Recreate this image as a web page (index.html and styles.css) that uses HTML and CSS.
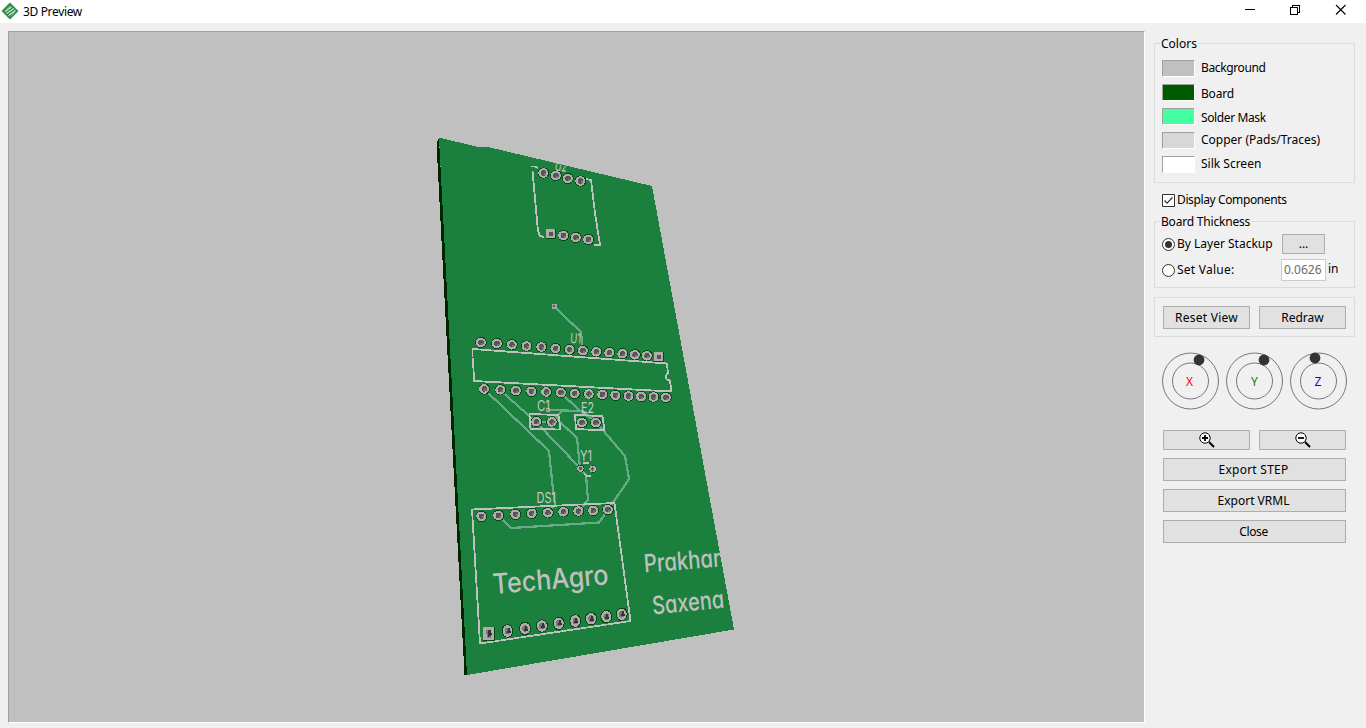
FILE: index.html
```html
<!DOCTYPE html>
<html lang="en">
<head>
<meta charset="utf-8">
<title>3D Preview</title>
<link rel="stylesheet" href="styles.css">
</head>
<body>
<div class="window">
  <header class="titlebar">
    <svg class="logo" width="18" height="18" viewBox="0 0 18 18">
      <path d="M9 .5 17.500 9 9 17.500.5 9z" fill="#2f8a49"/>
      <path d="M4 9.500 10.500 5M5.500 11.500 13 6.500M7.500 13.500 14.500 8.500" stroke="#d9eedc" stroke-width="1.100"/>
      <path d="M6 7 9.500 3.500M9.500 14.500 13.500 10.500" stroke="#8ac59a" stroke-width=".8"/>
    </svg>
    <span class="title">3D Preview</span>
    <svg class="controls" width="104" height="12" viewBox="0 0 104 12" fill="none" stroke="#000" shape-rendering="crispEdges">
      <path d="M0 5.500h10"/>
      <path d="M45.500 3.500h7v7h-7zM47.500 3.500v-2h7v7h-2"/>
      <path d="M91 1l9.500 9.500M100.500 1L91 10.500" shape-rendering="auto" stroke-width="1.100"/>
    </svg>
  </header>
  <main class="content">
    <div class="viewport">
      <svg class="scene" viewBox="9 32 1135 690" width="1135" height="690">
        <defs>
          <clipPath id="boardClip"><path d="M439 137.500 478 147h10L652 186 734 629.500 467 675z"/></clipPath>
          <g id="pad"><ellipse rx="5.800" ry="5.600" fill="#07480f"/><ellipse cx="-.2" rx="5" ry="4.800" fill="#b0acae"/><circle r="2.700" fill="#555"/><path d="M0 0h2v2h-2z" fill="#777"/></g>
          <g id="padL"><ellipse rx="6" ry="6.700" fill="#07480f"/><ellipse rx="5" ry="5.800" fill="#b0acae"/><ellipse rx="2.800" ry="3.300" fill="#777"/><path d="M0-3h2v3h1v2h-4v-2h1z" fill="#333"/></g>
          <g id="sq"><path d="M-5-5H5V5H-5z" fill="#07480f"/><path d="M-5-5H4V4H-5z" fill="#b0acae"/><circle r="2.500" fill="#555"/></g>
        </defs>
        <g shape-rendering="crispEdges">
          <path d="M439 138 437 142v11L442.500 260 464.500 675h3z" fill="#002800"/>
          <path d="M439 137.500 478 147h10L652 186 734 629.500 467 675z" fill="#1b803e"/>
          <g class="trace">
            <path d="M554 306.500 581 332 583 351"/>
            <path d="M484 389 549 451 553 490 555 505 548 512"/>
            <path d="M500 390 536 422 580 468"/>
            <path d="M561 393 579 410 596 422 625 456 629 479 608 510"/>
            <path d="M548 410 583 411 597 422M536 422H552L562 411M557 419 577 438 580 468 586 475 588 500 579 510"/>
            <path d="M498 515 511 528 599 522.500 608 510"/>
          </g>
          <g class="silk">
            <path d="M531 166.500h4l3 1.500M532.500 171 538 231l2 5 4 1M584 178.500l7 1.500 4 33 5 32h-6"/>
            <path d="M472.500 357v-8L667 363.500l1 10q-4 2-1 6l3 1 1.500 11L474 381 473 358"/>
            <path d="M529.500 414 558.500 415 560.500 429.500 530.500 429zM575 415 602.500 416 604.500 430.500 576 429z"/>
            <path d="M583 463h6M584 474l3 2h4"/>
            <path d="M472 509.500 614.500 503 630.500 621 480 643.500z"/>
          </g>
          <path d="M552 304h5v5h-5zM546 408h4v4h-4z" fill="#a5a9a6"/>
          <path d="M553 305h2v2h-2zM547 409h2v2h-2z" fill="#555"/>
          <g>
            <use href="#pad" x="543.500" y="173"/><use href="#pad" x="556" y="175.500"/><use href="#pad" x="568" y="178.500"/><use href="#pad" x="580.500" y="181"/>
            <use href="#sq" x="551" y="234"/><use href="#pad" x="563.500" y="235.500"/><use href="#pad" x="576" y="237.500"/><use href="#pad" x="588.500" y="239.500"/>
          </g>
          <g>
            <use href="#pad" x="481" y="342.500"/><use href="#pad" x="497" y="343.500"/><use href="#pad" x="512" y="344.800"/><use href="#pad" x="526.800" y="346"/><use href="#pad" x="541.500" y="347"/><use href="#pad" x="555.700" y="348.500"/><use href="#pad" x="569.700" y="349.700"/><use href="#pad" x="583" y="350.700"/><use href="#pad" x="596.500" y="351.800"/><use href="#pad" x="609.500" y="352.700"/><use href="#pad" x="622.500" y="353.700"/><use href="#pad" x="635" y="354.800"/><use href="#pad" x="647" y="355.800"/><use href="#sq" x="659" y="357"/>
            <use href="#pad" x="484.300" y="389"/><use href="#pad" x="500.500" y="389.800"/><use href="#pad" x="516" y="390.600"/><use href="#pad" x="531.500" y="391.300"/><use href="#pad" x="546.300" y="392"/><use href="#pad" x="561" y="392.700"/><use href="#pad" x="574.800" y="393.500"/><use href="#pad" x="589" y="394"/><use href="#pad" x="602.500" y="394.500"/><use href="#pad" x="615.500" y="395.300"/><use href="#pad" x="628.700" y="396"/><use href="#pad" x="641.200" y="396.500"/><use href="#pad" x="653.700" y="397"/><use href="#pad" x="666" y="397.500"/>
          </g>
          <g>
            <use href="#pad" x="536.500" y="421.700"/><use href="#pad" x="552" y="422"/><use href="#pad" x="582" y="422.500"/><use href="#pad" x="596" y="422.700"/>
            <use href="#pad" transform="translate(580.500 468.700) scale(.65)"/><use href="#pad" transform="translate(592.700 469) scale(.65)"/>
          </g>
          <g>
            <use href="#pad" x="481.500" y="516.300"/><use href="#pad" x="498.500" y="515.500"/><use href="#pad" x="515.500" y="514.300"/><use href="#pad" x="531.800" y="513.300"/><use href="#pad" x="548" y="512.800"/><use href="#pad" x="563.500" y="511.800"/><use href="#pad" x="578.500" y="511"/><use href="#pad" x="593.300" y="510.500"/><use href="#pad" x="608" y="509.700"/>
            <path d="M483 627h12v14h-12z" fill="#07480f"/><path d="M483 627h11v13h-11z" fill="#b0acae"/><path d="M486 630h5v8h-4z" fill="#777"/><path d="M488 630h3l1 5-4 2z" fill="#333"/>
            <use href="#padL" x="507.500" y="631"/><use href="#padL" x="525" y="628.500"/><use href="#padL" x="542" y="626"/><use href="#padL" x="558.700" y="623.300"/><use href="#padL" x="575.300" y="621"/><use href="#padL" x="591" y="618.700"/><use href="#padL" x="606.300" y="616.700"/><use href="#padL" x="621.700" y="614.300"/>
          </g>
        </g>
        <g class="legend" clip-path="url(#boardClip)">
          <text transform="translate(554.500 170.500) rotate(6)" textLength="12" lengthAdjust="spacingAndGlyphs">U2</text>
          <text transform="translate(570 343) rotate(3)" textLength="11" lengthAdjust="spacingAndGlyphs">U1</text>
          <text x="537" y="411" textLength="13" lengthAdjust="spacingAndGlyphs">C1</text>
          <text x="581" y="413" textLength="13" lengthAdjust="spacingAndGlyphs">E2</text>
          <text x="580" y="461" textLength="12" lengthAdjust="spacingAndGlyphs">Y1</text>
          <text x="536.500" y="503" textLength="19.500" lengthAdjust="spacingAndGlyphs">DS1</text>
          <text class="large" transform="translate(493.500 594) rotate(-4.800)" textLength="116" lengthAdjust="spacingAndGlyphs">TechAgro</text>
          <text class="medium" transform="translate(644.500 572.500) rotate(-4.500)" textLength="77" lengthAdjust="spacingAndGlyphs">Prakhar</text>
          <text class="medium" transform="translate(653 614.500) rotate(-5.500)" textLength="72" lengthAdjust="spacingAndGlyphs">Saxena</text>
        </g>
      </svg>
    </div>
    <aside class="sidebar">
      <fieldset class="group colors">
        <legend>Colors</legend>
        <div class="color-row high"><i class="swatch background"></i><span class="tight">Background</span></div>
        <div class="color-row low"><i class="swatch board"></i><span class="snug">Board</span></div>
        <div class="color-row low"><i class="swatch mask"></i><span class="tight">Solder Mask</span></div>
        <div class="color-row high"><i class="swatch copper"></i><span>Copper (Pads/Traces)</span></div>
        <div class="color-row high"><i class="swatch silkscreen"></i><span>Silk Screen</span></div>
      </fieldset>
      <div class="option display">
        <svg width="13" height="13" viewBox="0 0 13 13"><path d="M.5.5h12v12H.500z" fill="#fff" stroke="#333"/><path d="M2.500 6.500 5 9.200 10.500 3.500" fill="none" stroke="#333" stroke-width="1.200"/></svg>
        <span class="tight">Display Components</span>
      </div>
      <fieldset class="group thickness">
        <legend class="snug">Board Thickness</legend>
        <div class="thickness-row">
          <div class="option"><svg width="13" height="13" viewBox="0 0 13 13"><circle cx="6.500" cy="6.500" r="6" fill="#fff" stroke="#333"/><circle cx="6.500" cy="6.500" r="3.500" fill="#333"/></svg><span>By Layer Stackup</span></div>
          <button class="btn more">...</button>
        </div>
        <div class="thickness-row value">
          <div class="option"><svg width="13" height="13" viewBox="0 0 13 13"><circle cx="6.500" cy="6.500" r="6" fill="#fff" stroke="#333"/></svg><span class="wide">Set Value:</span></div>
          <div class="field">0.0626</div><span class="unit">in</span>
        </div>
      </fieldset>
      <div class="group view">
        <button class="btn reset wide">Reset View</button>
        <button class="btn redraw">Redraw</button>
      </div>
      <div class="dials">
        <svg class="dial" width="58" height="58" viewBox="0 0 58 58"><circle cx="28.500" cy="29" r="28"/><circle cx="28.500" cy="29" r="18"/><circle class="knob" cx="37" cy="8" r="5.400"/><text class="x" x="27.500" y="33.500">X</text></svg>
        <svg class="dial" width="58" height="58" viewBox="0 0 58 58"><circle cx="28.500" cy="29" r="28"/><circle cx="28.500" cy="29" r="18"/><circle class="knob" cx="38" cy="8" r="5.400"/><text class="y" x="28.500" y="33.500">Y</text></svg>
        <svg class="dial" width="58" height="58" viewBox="0 0 58 58"><circle cx="28.500" cy="29" r="28"/><circle cx="28.500" cy="29" r="18"/><circle class="knob" cx="25" cy="6" r="5.400"/><text class="z" x="28" y="33.500">Z</text></svg>
      </div>
      <div class="actions">
        <div class="zoom-row">
          <button class="btn zoom"><svg width="16" height="16" viewBox="0 0 16 16" fill="none" stroke="#000"><circle cx="6" cy="6" r="5.200" fill="#fff"/><path d="M3 6h6M6 3v6" stroke-width="1.800"/><path d="M10 10l5 5" stroke-width="2"/></svg></button>
          <button class="btn zoom"><svg width="16" height="16" viewBox="0 0 16 16" fill="none" stroke="#000"><circle cx="6" cy="6" r="5.200" fill="#fff"/><path d="M3 6h6" stroke-width="1.800"/><path d="M10 10l5 5" stroke-width="2"/></svg></button>
        </div>
        <button class="btn step wide">Export STEP</button>
        <button class="btn vrml">Export VRML</button>
        <button class="btn close tight">Close</button>
      </div>
    </aside>
  </main>
</div>
</body>
</html>
```

FILE: styles.css
```css
* { box-sizing: border-box; }
body { margin: 0; overflow: hidden; }
.window {
  width: 1366px; height: 728px; background: #f0f0f0;
  display: flex; flex-direction: column;
  font: 12px/16px "Noto Sans", "Open Sans", sans-serif; color: #000;
}
.tight { letter-spacing: -.38px; }
.snug { letter-spacing: -.2px; }
.wide { letter-spacing: .25px; }
.titlebar { height: 23px; background: #fff; display: flex; align-items: center; padding-left: 1px; }
.logo { margin-top: -1px; }
.title { margin: 1px 0 0 4px; letter-spacing: -.35px; }
.controls { margin: -3px 17px 0 auto; }
.content { flex: 1; display: flex; padding: 8px 0 5px 8px; }
.viewport { width: 1137px; height: 692px; background: #c0c0c0; border: 1px solid #a0a0a0; border-right-color: #fff; border-bottom-color: #fff; }
.scene { display: block; }
.trace { fill: none; stroke: #67aa87; stroke-width: 2.2; }
.silk { fill: none; stroke: #c0c0c0; stroke-width: 1.8; }
.legend { font: 400 14px Inter, Roboto, sans-serif; font-feature-settings: "cv11"; fill: #c8c8c8; }
.legend .large { font-size: 28px; font-weight: 500; fill: #c0c0c0; }
.legend .medium { font-size: 25px; font-weight: 500; fill: #c0c0c0; }
.sidebar { width: 201px; margin-left: 9px; padding-top: 12px; display: flex; flex-direction: column; }
.group { margin: 0; border: 1px solid #dcdcdc; min-width: 0; padding: 0; }
.group legend { float: left; height: 16px; margin: -8px 0 -8px -2px; padding: 0 1px; line-height: 16px; background: #f0f0f0; }
fieldset.group { padding-left: 7px; }
.colors { height: 140px; }
.group.colors { padding-left: 0; }
.colors legend { position: relative; }
.group.colors > legend { margin-left: 5px; }
.colors .color-row { margin-left: 7px; }
.color-row { clear: both; display: flex; height: 17px; margin-bottom: 7px; line-height: 17px; }
.colors legend + .color-row { margin-top: 16px; }
.color-row span { margin-left: 6px; }
.color-row.low span { padding-top: 1px; }
.color-row.high span { margin-top: -1px; }
.swatch { width: 33px; height: 17px; border: 1px solid #a0a0a0; border-right-color: #fff; border-bottom-color: #fff; }
.background { background: #c0c0c0; }
.board { background: #005a00; }
.mask { background: #43ffa1; }
.copper { background: #d7d7d7; }
.silkscreen { background: #fff; }
.option { display: flex; align-items: center; gap: 2px; }
.display { height: 16px; margin: 9px 0 13px 8px; }
.thickness { height: 67px; }
.thickness-row { clear: both; display: flex; align-items: center; height: 20px; }
.thickness legend + .thickness-row { margin-top: 12px; }
.thickness .option { width: 120px; }
.thickness-row.value { height: 22px; margin-top: 5px; }
.value .option { width: 119px; }
.btn { display: flex; align-items: center; justify-content: center; height: 23px; padding: 0; border: 1px solid #adadad; border-radius: 0; background: #e1e1e1; color: #000; font: inherit; }
.more { width: 43px; height: 20px; }
.field { width: 45px; height: 22px; border: 1px solid #ccc; background: #fff; color: #6d6d6d; padding-left: 2px; line-height: 20px; }
.unit { margin-left: 2px; margin-top: -2px; }
.view { height: 40px; margin-top: 9px; display: flex; gap: 9px; padding: 8px; }
.view .btn, .zoom { width: 87px; }
.dials { display: flex; gap: 6px; margin: 15px -6px 0 8px; }
.dial { fill: none; stroke: #777; flex: none; }
.dial .knob { fill: #333; stroke: none; }
.dial text { stroke: none; text-anchor: middle; font-size: 12px; }
.dial .x { fill: #f00; }
.dial .y { fill: #008000; }
.dial .z { fill: #00f; }
.actions { width: 183px; margin: 20px 0 0 9px; display: flex; flex-direction: column; gap: 8px; }
.actions .btn:not(.zoom) { padding-right: 2px; }
.zoom-row { display: flex; gap: 9px; }
.zoom { height: 20px; }
```
